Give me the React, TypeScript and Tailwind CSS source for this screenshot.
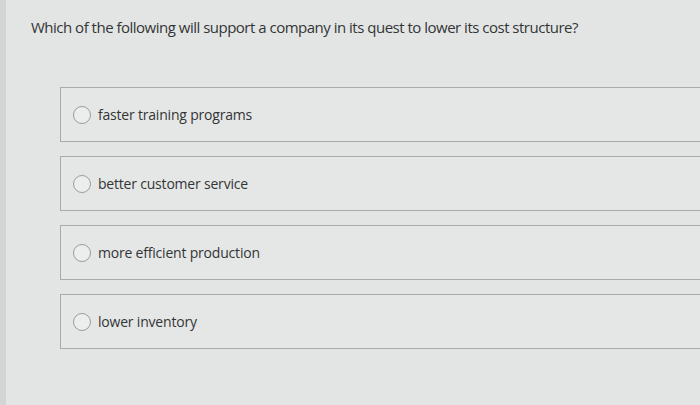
const options = [
  "faster training programs",
  "better customer service",
  "more efficient production",
  "lower inventory",
];

export default function App() {
  return (
    <div
      className="flex h-[405px] w-[700px] overflow-hidden bg-[#e3e5e5] text-[#333535]"
      style={{ fontFamily: '"Open Sans", "Liberation Sans", sans-serif' }}
    >
      <div className="w-[6px] shrink-0 bg-[#d3d5d5]" />
      <div className="flex min-w-0 flex-1 flex-col">
        <p className="pl-[25px] pt-[17px] text-[15px] leading-[20px] tracking-[-0.5px]">
          Which of the following will support a company in its quest to lower its cost structure?
        </p>
        <div className="mt-[50px] flex flex-col gap-[14px] pl-[54px]">
          {options.map((o) => (
            <label
              key={o}
              className="-mr-[10px] flex h-[55px] items-center border border-[#a9abab] bg-[#e5e7e7] pl-[12px]"
            >
              <span className="h-[18px] w-[18px] shrink-0 rounded-full border border-[#9a9c9c] bg-[#eceeee]" />
              <span className="ml-[7px] text-[14px] tracking-[-0.2px]">{o}</span>
            </label>
          ))}
        </div>
      </div>
    </div>
  );
}
